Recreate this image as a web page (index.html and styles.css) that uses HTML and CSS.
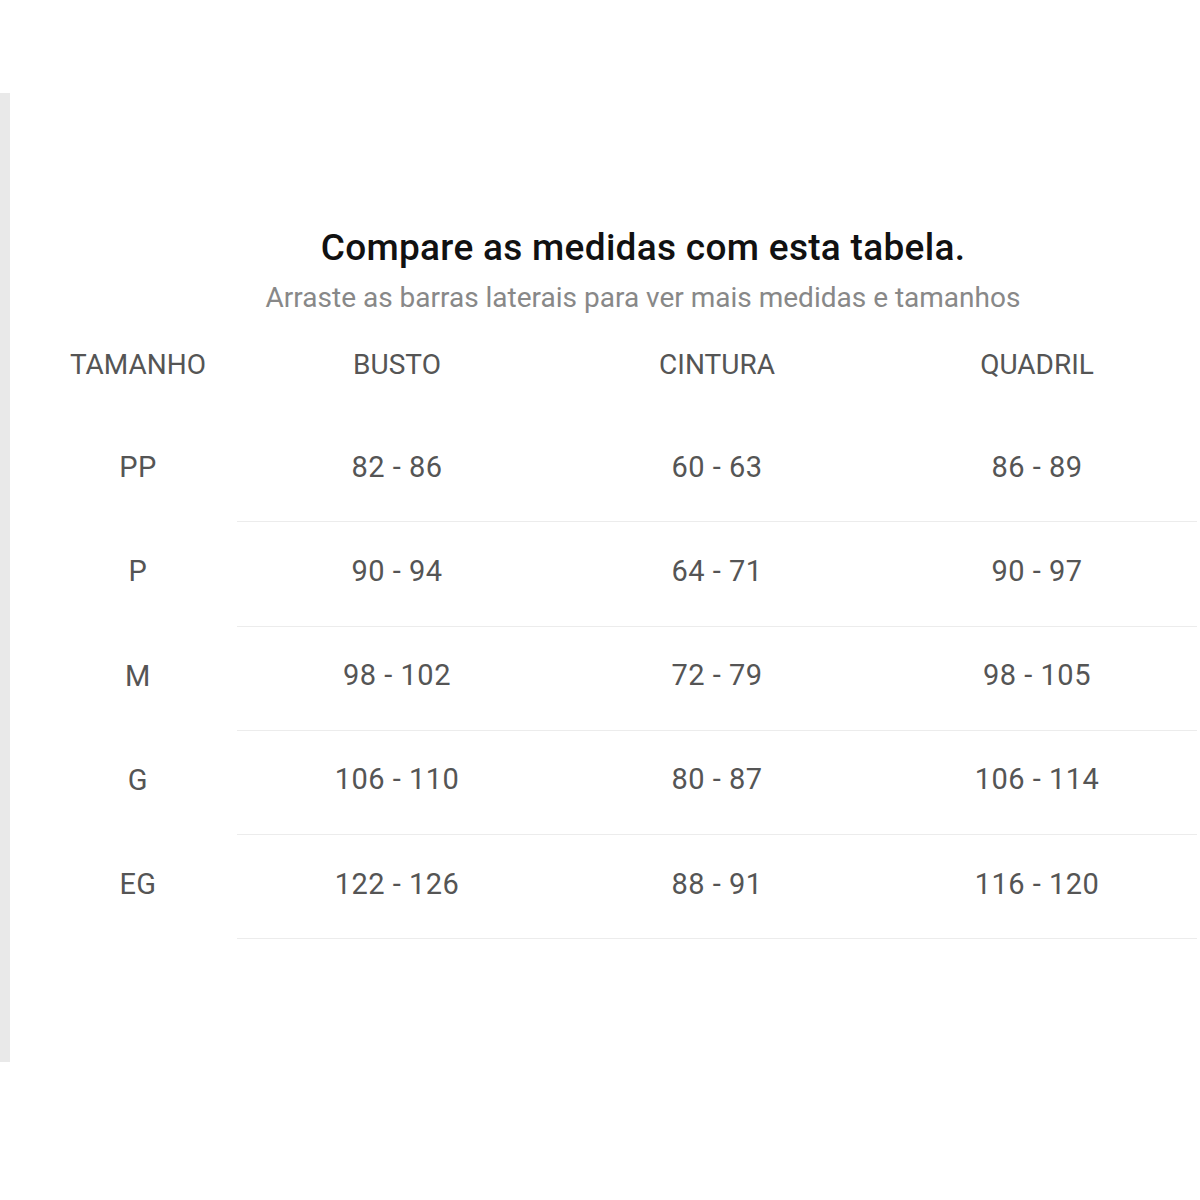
FILE: index.html
```html
<!DOCTYPE html>
<html lang="pt-BR">
<head>
<meta charset="utf-8">
<title>Tabela de medidas</title>
<link rel="stylesheet" href="styles.css">
</head>
<body>
<div class="page">
  <div class="panel">
    <div class="heading">
      <h1 class="title">Compare as medidas com esta tabela.</h1>
      <p class="subtitle">Arraste as barras laterais para ver mais medidas e tamanhos</p>
    </div>
    <div class="table">
      <div class="row head">
        <div class="cell size">TAMANHO</div>
        <div class="cell">BUSTO</div>
        <div class="cell">CINTURA</div>
        <div class="cell">QUADRIL</div>
      </div>
      <div class="row data">
        <div class="cell size">PP</div>
        <div class="cell">82 - 86</div>
        <div class="cell">60 - 63</div>
        <div class="cell">86 - 89</div>
      </div>
      <div class="row data">
        <div class="cell size">P</div>
        <div class="cell">90 - 94</div>
        <div class="cell">64 - 71</div>
        <div class="cell">90 - 97</div>
      </div>
      <div class="row data">
        <div class="cell size">M</div>
        <div class="cell">98 - 102</div>
        <div class="cell">72 - 79</div>
        <div class="cell">98 - 105</div>
      </div>
      <div class="row data">
        <div class="cell size">G</div>
        <div class="cell">106 - 110</div>
        <div class="cell">80 - 87</div>
        <div class="cell">106 - 114</div>
      </div>
      <div class="row data">
        <div class="cell size">EG</div>
        <div class="cell">122 - 126</div>
        <div class="cell">88 - 91</div>
        <div class="cell">116 - 120</div>
      </div>
    </div>
  </div>
</div>
</body>
</html>
```
FILE: styles.css
```css
html, body {
  margin: 0;
  padding: 0;
  background: #ffffff;
}
body {
  font-family: Roboto, "Liberation Sans", Arial, sans-serif;
  width: 1200px;
  height: 1200px;
  overflow: hidden;
}
.page {
  padding-top: 93px;
}
.panel {
  border-left: 10px solid #e9e9e9;
  height: 969px;
  box-sizing: border-box;
  padding-top: 133px;
}
.heading {
  padding-left: 76px;
  text-align: center;
}
.title {
  margin: 0;
  font-size: 37px;
  line-height: 44px;
  font-weight: 500;
  letter-spacing: 0.3px;
  color: #111111;
}
.subtitle {
  margin: 12px 0 0;
  font-size: 28px;
  line-height: 32px;
  font-weight: 400;
  color: #888888;
}
.table {
  margin-left: 29px;
  margin-top: 1px;
  width: 1158px;
}
.row {
  display: grid;
  grid-template-columns: 198px 320px 320px 320px;
  height: 104.25px;
}
.head {
  height: 103px;
}
.cell {
  display: flex;
  align-items: center;
  justify-content: center;
  padding-bottom: 6px;
  box-sizing: border-box;
  font-size: 29px;
  letter-spacing: 0.5px;
  color: #555555;
}
.head .cell {
  font-size: 28px;
  letter-spacing: 0;
  color: #555555;
  padding-bottom: 5px;
}
.data .cell {
  border-bottom: 1px solid #ececec;
}
.data .cell.size {
  border-bottom: none;
}
```
